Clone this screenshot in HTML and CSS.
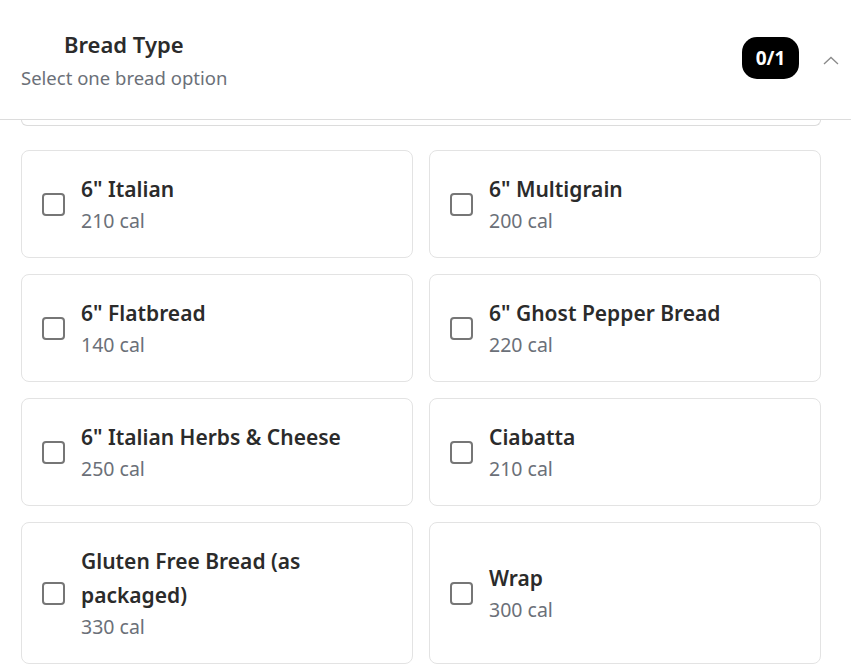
FILE: index.html
```html
<!DOCTYPE html>
<html lang="en">
<head>
<meta charset="utf-8">
<title>Bread Type</title>
<link rel="stylesheet" href="styles.css">
</head>
<body>
<div class="panel">
  <header class="head">
    <div class="head-text">
      <h2 class="head-title">Bread Type</h2>
      <p class="head-sub">Select one bread option</p>
    </div>
    <div class="head-right">
      <span class="badge">0/1</span>
      <svg class="chev" width="16" height="9" viewBox="0 0 16 9"><path d="M1 8 L8 1.5 L15 8" fill="none" stroke="#8a8a8a" stroke-width="1.3"/></svg>
    </div>
  </header>
  <div class="body">
    <div class="sliver"></div>
    <div class="grid">
      <label class="opt"><span class="box"></span><span class="txt"><span class="name">6" Italian</span><span class="cal">210 cal</span></span></label>
      <label class="opt"><span class="box"></span><span class="txt"><span class="name">6" Multigrain</span><span class="cal">200 cal</span></span></label>
      <label class="opt"><span class="box"></span><span class="txt"><span class="name">6" Flatbread</span><span class="cal">140 cal</span></span></label>
      <label class="opt"><span class="box"></span><span class="txt"><span class="name">6" Ghost Pepper Bread</span><span class="cal">220 cal</span></span></label>
      <label class="opt"><span class="box"></span><span class="txt"><span class="name">6" Italian Herbs &amp; Cheese</span><span class="cal">250 cal</span></span></label>
      <label class="opt"><span class="box"></span><span class="txt"><span class="name">Ciabatta</span><span class="cal">210 cal</span></span></label>
      <label class="opt"><span class="box"></span><span class="txt"><span class="name">Gluten Free Bread (as packaged)</span><span class="cal">330 cal</span></span></label>
      <label class="opt"><span class="box"></span><span class="txt"><span class="name">Wrap</span><span class="cal">300 cal</span></span></label>
    </div>
  </div>
</div>
</body>
</html>
```
FILE: styles.css
```css
* { box-sizing: border-box; }
html, body { margin: 0; padding: 0; background: #fff; }
body {
  font-family: "Noto Sans", "Open Sans", "Liberation Sans", sans-serif;
  color: #2b2b2b;
  overflow: hidden;
}
.panel { width: 851px; }
.head {
  height: 120px;
  display: flex;
  align-items: flex-start;
  justify-content: space-between;
  border-bottom: 1px solid #dcdcdc;
  padding: 0 12px 0 21px;
}
.head-text { padding-top: 27px; }
.head-title {
  margin: 0 0 0 43px;
  font-size: 22px;
  font-weight: 600;
  line-height: 34px;
  color: #2b2b2b;
}
.head-sub {
  margin: 0;
  font-size: 18.5px;
  line-height: 34px;
  color: #6b7078;
}
.head-right {
  display: flex;
  align-items: center;
  gap: 24px;
  padding-top: 37px;
}
.badge {
  display: inline-flex;
  align-items: center;
  justify-content: center;
  width: 57px;
  height: 42px;
  border-radius: 15px;
  background: #000;
  color: #fff;
  font-size: 19px;
  font-weight: 700;
}
.chev { display: block; margin-top: 4px; }
.body { padding: 0 30px 0 21px; }
.sliver {
  height: 6px;
  border: 1px solid #dcdcdc;
  border-top: none;
  border-radius: 0 0 8px 8px;
  margin-bottom: 24px;
}
.grid {
  display: grid;
  grid-template-columns: 1fr 1fr;
  gap: 16px;
}
.opt {
  display: flex;
  align-items: center;
  gap: 16px;
  padding: 21px 20px;
  border: 1px solid #e3e3e3;
  border-radius: 8px;
  min-height: 108px;
}
.box {
  flex: none;
  width: 23px;
  height: 23px;
  border: 2px solid #767676;
  border-radius: 4px;
}
.txt { display: flex; flex-direction: column; }
.name {
  font-size: 21px;
  font-weight: 600;
  line-height: 34px;
  color: #2b2b2b;
}
.cal {
  font-size: 19.5px;
  line-height: 30px;
  color: #6b7078;
}
```
